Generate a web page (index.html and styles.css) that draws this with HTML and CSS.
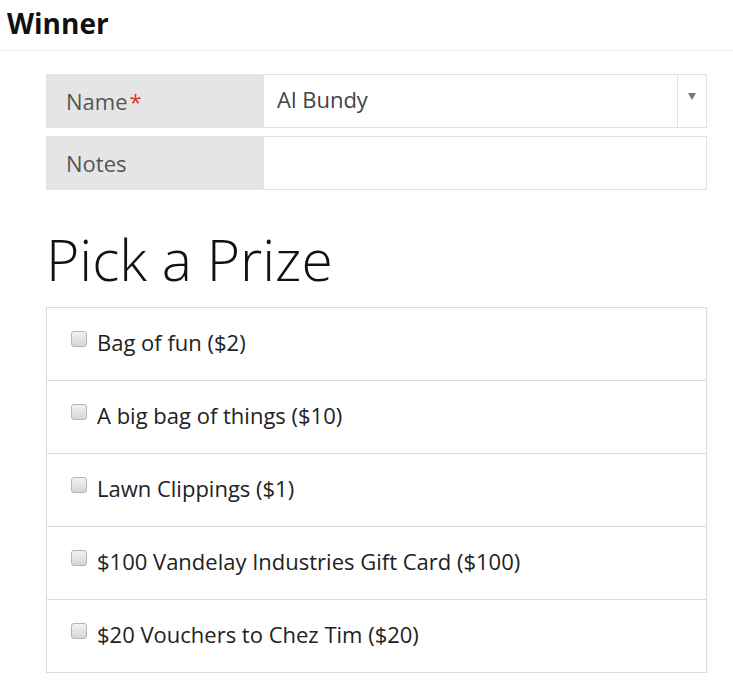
FILE: index.html
```html
<!DOCTYPE html>
<html>
    <head>
        <title>Winner</title>
        <link rel="stylesheet" href="styles.css">
    </head>

    <body>
        <div class="header">
            <h1>Winner</h1>
        </div>
        <div class="content">
            <div class="field">
                <div class="field-label">Name<span class="required">*</span></div>
                <div class="field-input select">
                    <span class="value">Al Bundy</span>
                    <span class="arrow"></span>
                </div>
            </div>
            <div class="field">
                <div class="field-label">Notes</div>
                <div class="field-input"></div>
            </div>

            <h2 class="title">Pick a Prize</h2>

            <ul class="prizes">
                <li><label><input type="checkbox" /> Bag of fun ($2)</label></li>
                <li><label><input type="checkbox" /> A big bag of things ($10)</label></li>
                <li><label><input type="checkbox" /> Lawn Clippings ($1)</label></li>
                <li><label><input type="checkbox" /> $100 Vandelay Industries Gift Card ($100)</label></li>
                <li><label><input type="checkbox" /> $20 Vouchers to Chez Tim ($20)</label></li>
            </ul>
        </div>
    </body>
</html>
```

FILE: styles.css
```css
body {
    margin: 0px;
    font-family: "Open Sans", "Liberation Sans", sans-serif;
    color: #222;
    background: white;
}
.header {
    height: 50px;
    border-bottom: 1px solid #eeeeee;
    padding-left: 7px;
}
.header h1 {
    margin: 0px;
    font-size: 28px;
    font-weight: 700;
    line-height: 46px;
    color: #111;
}
.content {
    padding: 23px 26px 0px 46px;
}
.field {
    display: flex;
    flex-flow: row nowrap;
    height: 54px;
    margin-bottom: 8px;
}
.field-label {
    width: 197px;
    padding-left: 20px;
    background-color: #e5e5e5;
    color: #555;
    font-size: 22px;
    line-height: 55px;
}
.required {
    color: #e3342f;
    margin-left: 2px;
}
.field-input {
    flex: 1;
    display: flex;
    align-items: center;
    border: 1px solid #e2e2e2;
    background: white;
}
.select .value {
    flex: 1;
    padding-left: 13px;
    padding-bottom: 4px;
    color: #444;
    font-size: 22px;
}
.select .arrow {
    width: 28px;
    height: 100%;
    border-left: 1px solid #e2e2e2;
    display: flex;
    justify-content: center;
}
.select .arrow::after {
    content: "";
    margin-top: 18px;
    border-left: 4px solid transparent;
    border-right: 4px solid transparent;
    border-top: 7px solid #777;
    height: 0px;
}
.title {
    margin: 34px 0px 13px 0px;
    font-size: 57px;
    font-weight: 300;
    line-height: 70px;
    color: #111;
}
.prizes {
    list-style: none;
    margin: 0px;
    padding: 0px;
    border: 1px solid #dcdcdc;
    box-shadow: 0px 1px 2px rgba(0, 0, 0, 0.06);
}
.prizes li {
    height: 72px;
    border-top: 1px solid #dcdcdc;
    padding-left: 24px;
    display: flex;
    align-items: center;
}
.prizes li:first-child {
    height: 72px;
    border-top: 0px;
}
.prizes label {
    font-size: 22px;
    color: #222;
    display: flex;
    align-items: center;
    margin-top: -4px;
}
.prizes input {
    appearance: none;
    width: 16px;
    height: 16px;
    margin: -6px 10px 0px 0px;
    border: 1px solid #b5b5b5;
    border-radius: 3px;
    background: linear-gradient(#f2f2f2, #d6d6d6);
}
```
